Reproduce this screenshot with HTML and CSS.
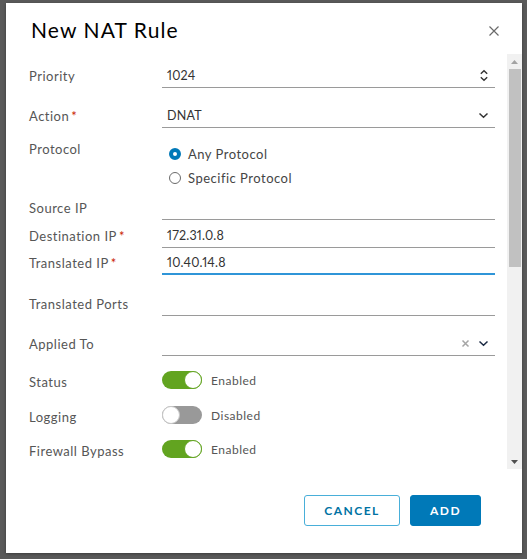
FILE: index.html
```html
<!DOCTYPE html>
<html lang="en">
<head>
<meta charset="utf-8">
<title>New NAT Rule</title>
<link rel="stylesheet" href="styles.css">
</head>
<body>
<div class="modal">
  <header class="modal-header">
    <h3 class="modal-title">New NAT Rule</h3>
    <button class="close" aria-label="Close">
      <svg width="12" height="12" viewBox="0 0 12 12"><path d="M1.5 1.5L10.5 10.5M10.5 1.5L1.5 10.5" stroke="#6a6a6a" stroke-width="1.2" fill="none"/></svg>
    </button>
  </header>
  <div class="modal-body">
    <div class="scroll-content">
      <form class="form">
        <div class="row">
          <label class="lbl">Priority</label>
          <div class="field"><span class="val">1024</span>
            <svg class="icon-spin" width="10" height="13" viewBox="0 0 10 13"><path d="M1.8 4.8L5 1.8L8.2 4.8M1.8 8.2L5 11.2L8.2 8.2" stroke="#333" stroke-width="1.4" fill="none"/></svg>
          </div>
        </div>
        <div class="row gap-16">
          <label class="lbl">Action<span class="req">*</span></label>
          <div class="field"><span class="val">DNAT</span>
            <svg class="icon-chev" width="11" height="7" viewBox="0 0 11 7"><path d="M1.5 1.5L5.5 5.3L9.5 1.5" stroke="#333" stroke-width="1.5" fill="none"/></svg>
          </div>
        </div>
        <div class="row row-top gap-14">
          <label class="lbl">Protocol</label>
          <div class="radios">
            <div class="radio-item"><span class="radio checked"></span><span class="radio-text">Any Protocol</span></div>
            <div class="radio-item"><span class="radio"></span><span class="radio-text">Specific Protocol</span></div>
          </div>
        </div>
        <div class="row gap-6">
          <label class="lbl">Source IP</label>
          <div class="field"></div>
        </div>
        <div class="row gap-4">
          <label class="lbl">Destination IP<span class="req">*</span></label>
          <div class="field"><span class="val">172.31.0.8</span></div>
        </div>
        <div class="row gap-3">
          <label class="lbl">Translated IP<span class="req">*</span></label>
          <div class="field focused"><span class="val">10.40.14.8</span></div>
        </div>
        <div class="row gap-17">
          <label class="lbl">Translated Ports</label>
          <div class="field"></div>
        </div>
        <div class="row gap-16">
          <label class="lbl">Applied To</label>
          <div class="field">
            <svg class="icon-clear" width="9" height="9" viewBox="0 0 9 9"><path d="M1.5 1.5L7.5 7.5M7.5 1.5L1.5 7.5" stroke="#a5a5a5" stroke-width="1.5" fill="none"/></svg>
            <svg class="icon-chev2" width="11" height="7" viewBox="0 0 11 7"><path d="M1.5 1.5L5.5 5.3L9.5 1.5" stroke="#1b2a44" stroke-width="1.5" fill="none"/></svg>
          </div>
        </div>
        <div class="row toggle-row gap-12">
          <label class="lbl lbl-low">Status</label>
          <div class="toggle on"><span class="knob"></span></div>
          <span class="toggle-text">Enabled</span>
        </div>
        <div class="row toggle-row gap-11">
          <label class="lbl lbl-low">Logging</label>
          <div class="toggle"><span class="knob"></span></div>
          <span class="toggle-text">Disabled</span>
        </div>
        <div class="row toggle-row gap-10">
          <label class="lbl lbl-low">Firewall Bypass</label>
          <div class="toggle on"><span class="knob"></span></div>
          <span class="toggle-text">Enabled</span>
        </div>
      </form>
    </div>
    <div class="scrollbar" aria-hidden="true">
      <div class="sb-btn"><svg width="7" height="4" viewBox="0 0 7 4"><path d="M0 4L3.5 0L7 4Z" fill="#a3a3a3"/></svg></div>
      <div class="sb-track"><div class="sb-thumb"></div></div>
      <div class="sb-btn"><svg width="7" height="4" viewBox="0 0 7 4"><path d="M0 0L7 0L3.5 4Z" fill="#505050"/></svg></div>
    </div>
  </div>
  <footer class="modal-footer">
    <button class="btn btn-outline" type="button">CANCEL</button>
    <button class="btn btn-primary" type="button">ADD</button>
  </footer>
</div>
</body>
</html>
```
FILE: styles.css
```css
html, body {
  margin: 0;
  padding: 0;
}
body {
  width: 527px;
  height: 559px;
  overflow: hidden;
  background: #5a5a5a;
  font-family: Lato, "Liberation Sans", sans-serif;
}
.modal {
  margin: 3px 0 0 6px;
  width: 516px;
  height: 550px;
  background: #fff;
  display: flex;
  flex-direction: column;
  box-shadow: 0 1px 3px rgba(0,0,0,0.35);
}
.modal-header {
  flex: none;
  height: 51px;
  box-sizing: border-box;
  padding: 2px 22px 0 25px;
  display: flex;
  align-items: center;
  justify-content: space-between;
}
.modal-title {
  margin: 0;
  font-size: 21px;
  font-weight: 400;
  color: #000;
  letter-spacing: 1.1px;
}
.close {
  border: 0;
  background: none;
  padding: 0;
  margin-top: 2px;
  width: 12px;
  height: 12px;
  display: flex;
}
.modal-body {
  flex: none;
  height: 415px;
  display: flex;
}
.scroll-content {
  flex: 1;
  overflow: hidden;
  padding: 0 12px 0 23px;
}
.form {
  padding-top: 10px;
}
.scrollbar {
  flex: none;
  width: 15px;
  background: #f1f1f1;
  display: flex;
  flex-direction: column;
}
.sb-btn {
  flex: none;
  height: 15px;
  display: flex;
  align-items: center;
  justify-content: center;
}
.sb-track {
  flex: 1;
  padding: 0 1px 0 2px;
}
.sb-thumb {
  height: 198px;
  background: #c1c1c1;
}
.row {
  display: flex;
  align-items: center;
}
.row-top {
  align-items: flex-start;
}
.gap-3 { margin-top: 3px; }
.gap-4 { margin-top: 4px; }
.gap-6 { margin-top: 6px; }
.gap-10 { margin-top: 10px; }
.gap-11 { margin-top: 11px; }
.gap-12 { margin-top: 12px; }
.gap-14 { margin-top: 14px; }
.gap-16 { margin-top: 16px; }
.gap-17 { margin-top: 17px; }
.lbl {
  flex: none;
  width: 133px;
  font-size: 13px;
  letter-spacing: 0.5px;
  color: #565656;
  line-height: 14px;
}
.lbl-low {
  padding-top: 3px;
}
.req {
  color: #c92100;
  margin-left: 2px;
}
.field {
  flex: 1;
  height: 24px;
  box-sizing: border-box;
  border-bottom: 1px solid #9a9a9a;
  display: flex;
  align-items: center;
  padding: 0 6px 0 5px;
}
.field.focused {
  border-bottom: 2px solid #2f95d8;
}
.val {
  font-size: 12.5px;
  color: #333;
  font-variant-numeric: proportional-nums;
  letter-spacing: 0.2px;
}
.icon-spin, .icon-chev {
  margin-left: auto;
}
.icon-clear {
  margin-left: auto;
  margin-right: 8px;
}
.radios {
  display: flex;
  flex-direction: column;
  padding-left: 7px;
}
.radio-item {
  height: 24px;
  display: flex;
  align-items: center;
}
.radio {
  width: 12px;
  height: 12px;
  box-sizing: border-box;
  border-radius: 50%;
  border: 1px solid #6a6a6a;
  background: #fff;
}
.radio.checked {
  border: 4px solid #0079b8;
}
.radio-text {
  margin-left: 7px;
  font-size: 13px;
  letter-spacing: 0.5px;
  color: #454545;
}
.toggle-row {
  height: 24px;
}
.toggle {
  flex: none;
  width: 40px;
  height: 18px;
  box-sizing: border-box;
  border-radius: 9px;
  background: #999;
  display: flex;
  justify-content: flex-start;
}
.toggle.on {
  background: #62a420;
  justify-content: flex-end;
}
.knob {
  width: 18px;
  height: 18px;
  box-sizing: border-box;
  border-radius: 50%;
  background: #fff;
  border: 1px solid #c7c7c7;
}
.toggle.on .knob {
  border-color: #62a420;
}
.toggle-text {
  margin-left: 9px;
  font-size: 12px;
  letter-spacing: 0.5px;
  color: #565656;
}
.modal-footer {
  flex: none;
  display: flex;
  justify-content: flex-end;
  gap: 10px;
  padding: 26px 41px 0 0;
}
.btn {
  height: 31px;
  box-sizing: border-box;
  border-radius: 3px;
  font-family: Lato, "Liberation Sans", sans-serif;
  font-size: 12px;
  font-weight: 700;
  letter-spacing: 1.5px;
  padding: 0;
}
.btn-outline {
  width: 96px;
  background: #fff;
  color: #0072a3;
  border: 1px solid #49afd9;
}
.btn-primary {
  width: 71px;
  background: #0079b8;
  color: #fff;
  border: 1px solid #0079b8;
}
```
